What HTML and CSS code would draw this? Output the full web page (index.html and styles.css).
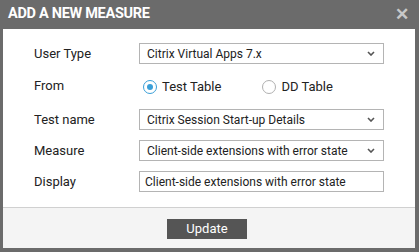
FILE: index.html
```html
<!doctype html>
<html>
  <head>
    <meta charset="utf-8" />
    <title>Add a New Measure</title>
    <link rel="stylesheet" href="styles.css">
  </head>

  <body>
    <div class="dialog">
      <div class="dialog-header">
        <h1>ADD A NEW MEASURE</h1>
        <span class="close">&#x2715;</span>
      </div>

      <div class="dialog-body">
        <div class="row">
          <label>User Type</label>
          <div class="select">
            <span>Citrix Virtual Apps 7.x</span>
            <svg class="chev" width="8" height="5" viewBox="0 0 8 5"><path d="M1 1 L4 4 L7 1" fill="none" stroke="#555" stroke-width="1.6"/></svg>
          </div>
        </div>

        <div class="row row-radio">
          <label class="label-top">From</label>
          <div class="radios">
            <span class="radio checked"></span><span class="radio-text">Test Table</span>
            <span class="radio dd"></span><span class="radio-text">DD Table</span>
          </div>
        </div>

        <div class="row">
          <label>Test name</label>
          <div class="select">
            <span>Citrix Session Start-up Details</span>
            <svg class="chev" width="8" height="5" viewBox="0 0 8 5"><path d="M1 1 L4 4 L7 1" fill="none" stroke="#555" stroke-width="1.6"/></svg>
          </div>
        </div>

        <div class="row">
          <label>Measure</label>
          <div class="select">
            <span>Client-side extensions with error state</span>
            <svg class="chev" width="8" height="5" viewBox="0 0 8 5"><path d="M1 1 L4 4 L7 1" fill="none" stroke="#555" stroke-width="1.6"/></svg>
          </div>
        </div>

        <div class="row">
          <label>Display</label>
          <div class="input">Client-side extensions with error state</div>
        </div>
      </div>

      <div class="dialog-footer">
        <button>Update</button>
      </div>
    </div>
  </body>
</html>
```

FILE: styles.css
```css
body {
  margin: 0;
  background-color: #6b6b6b;
  font-family: Roboto, "Liberation Sans", sans-serif;
  color: #222;
}

.dialog {
  width: 419px;
  height: 252px;
  display: flex;
  flex-direction: column;
  padding: 0 4px 4px 3px;
  box-sizing: border-box;
}

.dialog-header {
  height: 29px;
  display: flex;
  align-items: center;
  justify-content: space-between;
}

.dialog-header h1 {
  margin: 0 0 2px 5px;
  font-size: 14.5px;
  font-weight: bold;
  color: #fff;
  letter-spacing: -0.3px;
}

.close {
  color: #c8c8c8;
  font-size: 17px;
  font-weight: bold;
  margin: 0 6px 2px 0;
}

.dialog-body {
  background-color: #fff;
  padding: 14px 0 0 31px;
  height: 178px;
  box-sizing: border-box;
  display: flex;
  flex-direction: column;
  gap: 10px;
}

.row {
  display: flex;
  align-items: center;
  height: 21px;
}

.row label {
  width: 105px;
  font-size: 13px;
}

.row-radio {
  height: 25px;
  align-items: flex-start;
}

.label-top {
  padding-top: 4px;
}

.select,
.input {
  width: 245px;
  height: 21px;
  border: 1px solid #b4b4b4;
  box-sizing: border-box;
  font-size: 12px;
  display: flex;
  align-items: center;
}

.select {
  padding: 0 8px 0 7px;
  justify-content: space-between;
}

.input {
  padding-left: 5px;
}

.radios {
  display: flex;
  align-items: center;
  height: 25px;
  font-size: 13px;
}

.radio {
  width: 14px;
  height: 14px;
  border: 1px solid #b0b0b0;
  border-radius: 50%;
  box-sizing: border-box;
  margin: 0 5px 0 4px;
  position: relative;
}

.radio.checked {
  border-color: #3a9fd8;
}

.radio.checked::after {
  content: "";
  position: absolute;
  left: 3px;
  top: 3px;
  width: 6px;
  height: 6px;
  border-radius: 50%;
  background-color: #3a9fd8;
}

.radio.dd {
  margin-left: 41px;
}

.dialog-footer {
  flex: 1;
  background-color: #f4f4f4;
  border-top: 1px solid #d0d0d0;
  display: flex;
  justify-content: center;
  align-items: center;
}

button {
  width: 80px;
  height: 20px;
  background-color: #555;
  color: #fff;
  border: none;
  font-family: Roboto, "Liberation Sans", sans-serif;
  font-size: 13px;
  padding: 0;
  margin: 1px 4px 0 0;
}
```
